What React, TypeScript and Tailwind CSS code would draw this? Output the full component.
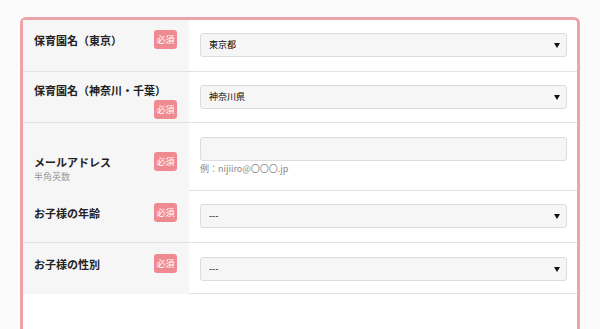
import React from 'react';

type Row = {
    label: string;
    sub?: string;
    kind: 'select' | 'input';
    value?: string;
    hint?: string;
    h: string;
    labelPad: string;
    labelBorder: boolean;
    fieldPad: string;
};

const rows: Row[] = [
    { label: '保育園名（東京）', kind: 'select', value: '東京都', h: 'h-[52px]', labelPad: 'pt-[10px]', labelBorder: true, fieldPad: 'pt-[13px]' },
    { label: '保育園名（神奈川・千葉）', kind: 'select', value: '神奈川県', h: 'h-[51px]', labelPad: 'pt-[8px]', labelBorder: true, fieldPad: 'pt-[13px]' },
    { label: 'メールアドレス', sub: '半角英数', kind: 'input', hint: '例：nijiiro@〇〇〇.jp', h: 'h-[68px]', labelPad: 'pt-[29px]', labelBorder: false, fieldPad: 'pt-[14px]' },
    { label: 'お子様の年齢', kind: 'select', value: '---', h: 'h-[52px]', labelPad: 'pt-[12px]', labelBorder: true, fieldPad: 'pt-[13px]' },
    { label: 'お子様の性別', kind: 'select', value: '---', h: 'h-[51px]', labelPad: 'pt-[11px]', labelBorder: false, fieldPad: 'pt-[14px]' },
];

function Badge() {
    return (
        <span className="ml-auto w-[23px] h-[19px] shrink-0 rounded-[3px] bg-[#f08a91] text-white text-[9px] flex items-center justify-center">
            必須
        </span>
    );
}

function SelectBox({ value }: { value?: string }) {
    return (
        <div className="h-[24px] w-full rounded-[3px] border border-[#dcdcdc] bg-[#f6f6f6] flex items-center justify-between pl-[8px] pr-[6px] text-[9px] text-black">
            <span>{value}</span>
            <svg width="6" height="5" viewBox="0 0 6 5">
                <path d="M0 0 H6 L3 5 Z" fill="#111" />
            </svg>
        </div>
    );
}

export default function App() {
    return (
        <div className="w-[600px] h-[329px] overflow-hidden bg-[#fbfbfb] pt-[17px] px-[20px]" style={{ fontFamily: '"Noto Sans CJK JP", "Noto Sans", sans-serif' }}>
            <div className="min-h-[340px] rounded-t-[6px] border-[3px] border-b-0 border-[#eca4aa] bg-white">
                {rows.map((r, i) => (
                    <div key={i} className={`grid grid-cols-[166px_1fr] ${r.h}`}>
                        <div className={`bg-[#f6f6f6] pl-[11px] pr-[12px] ${r.labelPad} ${r.labelBorder ? 'border-b border-[#e2e2e2]' : ''}`}>
                            <div className="flex flex-wrap items-start">
                                <div className="flex flex-col">
                                    <span className="text-[11px] font-semibold leading-[20px] text-[#222]">{r.label}</span>
                                    {r.sub && <span className="text-[9px] leading-[10px] text-[#999]">{r.sub}</span>}
                                </div>
                                <Badge />
                            </div>
                        </div>
                        <div className={`border-b border-[#e2e2e2] pl-[11px] pr-[10px] ${r.fieldPad}`}>
                            {r.kind === 'select' ? (
                                <SelectBox value={r.value} />
                            ) : (
                                <div>
                                    <div className="h-[24px] w-full rounded-[3px] border border-[#dcdcdc] bg-[#f6f6f6]" />
                                    <div className="mt-[2px] text-[9px] leading-[12px] text-[#888]">{r.hint}</div>
                                </div>
                            )}
                        </div>
                    </div>
                ))}
            </div>
        </div>
    );
}
